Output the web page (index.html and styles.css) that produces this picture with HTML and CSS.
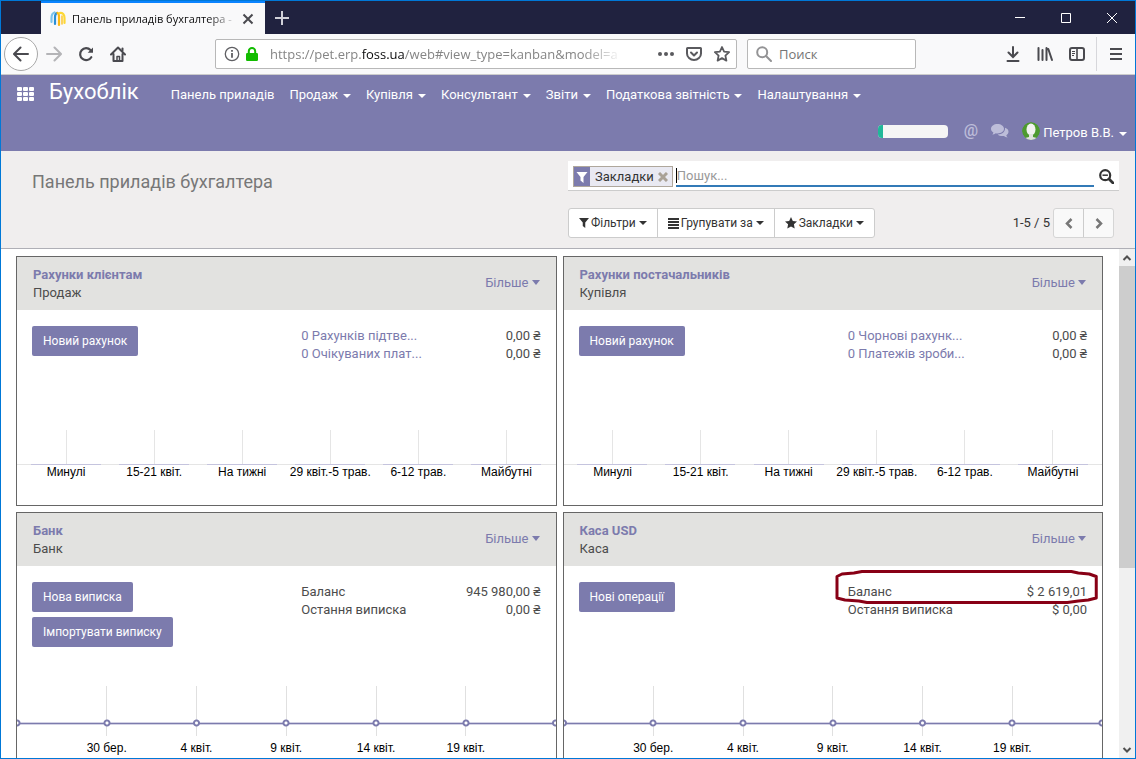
FILE: index.html
```html
<!DOCTYPE html>
<html lang="uk">
<head>
    <meta charset="UTF-8">
    <meta name="viewport" content="width=device-width, initial-scale=1.0">
    <title>Панель приладів бухгалтера</title>
    <link rel="stylesheet" href="styles.css">
</head>
<body>
<div class="window">

    <!-- Tabs -->
    <div class="titlebar">
        <div class="tab">
            <svg class="tab-icon" width="16" height="16" viewBox="0 0 16 16" fill="none" stroke-width="2.2" stroke-linecap="round">
                <path d="M1.500 11V7Q1.500 2.500 4.500 1.500" stroke="#7cc4ec"/>
                <path d="M5 13V6Q5 3 7 2" stroke="#2b8fd6"/>
                <path d="M7.500 2Q9 2.500 9 6V14" stroke="#fdb913"/>
                <path d="M9.500 2Q14.500 1.500 14.500 7V12" stroke="#fdd835"/>
                <path d="M12 5V13" stroke="#fdc52c" stroke-width="1.500"/>
            </svg>
            <span class="tab-title">Панель приладів бухгалтера -</span>
            <button class="tab-close" aria-label="Закрыть вкладку">
                <svg width="12" height="12" viewBox="0 0 12 12" stroke="#4a4a4f" stroke-width="2"><path d="M1.500 1.500l9 9M10.500 1.500l-9 9"/></svg>
            </button>
        </div>
        <button class="new-tab" aria-label="Новая вкладка">
            <svg width="14" height="14" viewBox="0 0 14 14" stroke="#d0d0d8" stroke-width="2"><path d="M7 0v14M0 7h14"/></svg>
        </button>
        <div class="window-buttons">
            <button aria-label="Свернуть"><svg width="10" height="10" stroke="#fff"><path d="M0 4.500h10"/></svg></button>
            <button aria-label="Развернуть"><svg width="10" height="10" stroke="#fff" fill="none"><path d="M.5.5h9v9h-9z"/></svg></button>
            <button aria-label="Закрыть"><svg width="10" height="10" stroke="#fff"><path d="M0 0l10 10M10 0L0 10"/></svg></button>
        </div>
    </div>

    <!-- Address bar -->
    <div class="toolbar">
        <button class="back" aria-label="Назад">
            <svg width="16" height="16" viewBox="0 0 16 16" fill="none" stroke="#4a4a4f" stroke-width="2" stroke-linecap="round" stroke-linejoin="round"><path d="M15 8H1.500M7.500 1.500L1 8l6.500 6.500"/></svg>
        </button>
        <button class="tool" aria-label="Вперёд">
            <svg width="16" height="16" viewBox="0 0 16 16" fill="none" stroke="#b4b4b7" stroke-width="2" stroke-linecap="round" stroke-linejoin="round"><path d="M1 8h13.500M8.500 1.500L15 8l-6.500 6.500"/></svg>
        </button>
        <button class="tool" aria-label="Обновить">
            <svg width="16" height="16" viewBox="0 0 16 16" fill="none" stroke="#4a4a4f" stroke-width="2.200" stroke-linecap="round"><path d="M13.300 11.200A6 6 0 1 1 12.500 4"/><path d="M15 1.500v5.300H9.700z" fill="#4a4a4f" stroke="none"/></svg>
        </button>
        <button class="tool" aria-label="Домой">
            <svg width="16" height="16" viewBox="0 0 16 16" fill="none" stroke="#4a4a4f" stroke-width="2" stroke-linecap="round" stroke-linejoin="round"><path d="M1 8.500L8 1.500l7 7M3.500 8v7h9V8"/><path d="M7 15v-4.500h2.500V15" stroke-width="1.500"/><path d="M12.500 2.500v2"/></svg>
        </button>
        <div class="urlbar">
            <svg width="16" height="16" viewBox="0 0 16 16" fill="none" stroke="#5f5f63"><circle cx="8" cy="8" r="6.700" stroke-width="1.300"/><path d="M8 7v4.800M8 4v1.800" stroke-width="1.800"/></svg>
            <svg class="lock" width="12" height="14" viewBox="0 0 12 14"><path d="M2.800 7V4.200a3.200 3.200 0 0 1 6.400 0V7" fill="none" stroke="#12bc00" stroke-width="2"/><rect y="6" width="12" height="8" rx="1.200" fill="#12bc00"/></svg>
            <span class="url">https://pet.erp.<b>foss.ua</b>/web#view_type=kanban&amp;model=a</span>
            <svg width="16" height="16" fill="#5a5a5e"><circle cx="2" cy="8" r="2"/><circle cx="8" cy="8" r="2"/><circle cx="14" cy="8" r="2"/></svg>
            <svg width="16" height="16" viewBox="0 0 16 16" fill="none" stroke="#5a5a5e" stroke-width="2" stroke-linecap="round" stroke-linejoin="round"><path d="M1.500 2h13q.5 0 .5.500V7.500A7 6.500 0 0 1 1 7.500V2.500q0-.5.5-.5z"/><path d="M5 6.500l3 3 3-3"/></svg>
            <svg width="16" height="16" viewBox="0 0 16 16" fill="none" stroke="#5a5a5e" stroke-width="1.800" stroke-linejoin="round"><path d="M8 1l2.100 4.600 5 .6-3.700 3.400 1 5L8 12.100l-4.400 2.500 1-5L.9 6.200l5-.6z"/></svg>
        </div>
        <label class="searchbar">
            <svg width="16" height="16" viewBox="0 0 16 16" fill="none" stroke="#939395" stroke-width="2" stroke-linecap="round"><circle cx="6.200" cy="6.200" r="5"/><path d="M10 10l5 5"/></svg>
            <input type="text" placeholder="Поиск" aria-label="Поиск">
        </label>
        <div class="toolbar-end">
            <button class="tool" aria-label="Загрузки">
                <svg width="14" height="16" viewBox="0 0 14 16" fill="none" stroke="#4a4a4f" stroke-width="2" stroke-linecap="round"><path d="M7 1v9.500M2.500 6.500L7 11l4.500-4.500M1.500 15h11"/></svg>
            </button>
            <button class="tool" aria-label="Библиотека">
                <svg width="16" height="16" viewBox="0 0 16 16" stroke="#4a4a4f" stroke-width="2" stroke-linecap="round"><path d="M1.500 2v12M5.500 4v10M9.500 2v12M11.300 3l3.700 11"/></svg>
            </button>
            <button class="tool" aria-label="Боковая панель">
                <svg width="16" height="16" viewBox="0 0 16 16" fill="none" stroke="#4a4a4f"><rect x="1" y="2" width="14" height="12" rx="2" stroke-width="2"/><path d="M8 2v12" stroke-width="1.600"/><path d="M3 5.500h3M3 7.500h3M3 9.500h2"/></svg>
            </button>
            <span class="separator"></span>
            <button class="tool" aria-label="Меню">
                <svg width="12" height="12" viewBox="0 0 12 12" stroke="#4a4a4f" stroke-width="2"><path d="M0 1h12M0 6h12M0 11h12"/></svg>
            </button>
        </div>
    </div>

    <!-- Application menu -->
    <header class="navbar">
        <div class="nav-row">
            <a class="apps" href="#" aria-label="Додатки">
                <svg width="18" height="14" fill="#fff"><rect width="5" height="4" rx="1"/><rect x="6" width="5" height="4" rx="1"/><rect x="12" width="5" height="4" rx="1"/><rect y="5" width="5" height="4" rx="1"/><rect x="6" y="5" width="5" height="4" rx="1"/><rect x="12" y="5" width="5" height="4" rx="1"/><rect y="10" width="5" height="4" rx="1"/><rect x="6" y="10" width="5" height="4" rx="1"/><rect x="12" y="10" width="5" height="4" rx="1"/></svg>
            </a>
            <span class="brand">Бухоблік</span>
            <nav class="menu">
                <a href="#">Панель приладів</a>
                <a href="#">Продаж<i class="caret"></i></a>
                <a href="#">Купівля<i class="caret"></i></a>
                <a href="#">Консультант<i class="caret"></i></a>
                <a href="#">Звіти<i class="caret"></i></a>
                <a href="#">Податкова звітність<i class="caret"></i></a>
                <a href="#">Налаштування<i class="caret"></i></a>
            </nav>
        </div>
        <div class="systray">
            <div class="planner"><div class="planner-fill"></div></div>
            <a class="mention" href="#">@</a>
            <a class="chat" href="#" aria-label="Повідомлення">
                <svg width="18" height="16" viewBox="0 0 18 16" fill="#bdbdd9"><path d="M6.500 1C10 1 13 3.100 13 5.800s-3 4.700-6.500 4.700c-.6 0-1.200 0-1.700-.2-1 .8-2.200 1.200-3.600 1.300.6-.6 1-1.200 1.200-2.100C1 8.700 0 7.400 0 5.800 0 3.100 3 1 6.500 1z"/><path d="M14 4.800c2.300.8 3.500 2.200 3.500 3.900 0 1.500-.9 2.700-2.200 3.500.2.900.6 1.600 1.300 2.200-1.400 0-2.700-.5-3.700-1.400-2.400.4-4.900-.2-6.200-1.500C10.800 11.500 14.500 9 14 4.800z"/></svg>
            </a>
            <a class="user" href="#">
                <svg width="18" height="18" viewBox="0 0 18 18"><defs><clipPath id="face"><circle cx="9" cy="9" r="9"/></clipPath></defs><g clip-path="url(#face)"><circle cx="9" cy="9" r="9" fill="#4d9a2f"/><ellipse cx="9" cy="7.500" rx="4.500" ry="6" fill="#f1f2ee"/><path d="M7 12h4v3l4 1v2H3v-2l4-1z" fill="#dfe3dc"/></g></svg>
                <span>Петров В.В.<i class="caret"></i></span>
            </a>
        </div>
    </header>

    <!-- Control panel -->
    <section class="control-panel">
        <h1>Панель приладів бухгалтера</h1>
        <div class="search-area">
            <div class="searchview">
                <div class="facet">
                    <span class="facet-icon"><svg width="12" height="12" viewBox="0 0 12 12" fill="#fff"><path d="M.5 1h11L7.500 6v6L4.500 9.500V6z"/></svg></span>
                    <span class="facet-label">Закладки</span>
                    <button class="facet-remove" aria-label="Видалити"><svg width="10" height="10" viewBox="0 0 10 10" stroke="#a9a196" stroke-width="3"><path d="M1 1l8 8M9 1L1 9"/></svg></button>
                </div>
                <div class="search-input">
                    <span class="cursor"></span>
                    <input type="text" placeholder="Пошук..." aria-label="Пошук">
                </div>
                <button class="search-more" aria-label="Розширений пошук">
                    <svg width="15" height="15" viewBox="0 0 15 15" fill="none" stroke="#333"><circle cx="6.200" cy="6.200" r="5" stroke-width="2.200"/><path d="M10 10l4 4" stroke-width="2.800" stroke-linecap="round"/><path d="M3.500 6.200h5.400" stroke-width="1.500"/></svg>
                </button>
            </div>
            <div class="search-options">
                <div class="btn-group">
                    <button><svg width="10" height="10" viewBox="0 0 12 12" fill="#333"><path d="M0 0h12L7.500 5.500V12L4.500 9.500v-4z"/></svg>Фільтри<i class="caret"></i></button>
                    <button><svg width="11" height="11" fill="#333"><path d="M0 0h11v2H0zM0 3h11v2H0zM0 6h11v2H0zM0 9h11v2H0z"/></svg>Групувати за<i class="caret"></i></button>
                    <button><svg width="12" height="12" viewBox="0 0 12 12" fill="#333"><path d="M6 0l1.800 3.900 4.200.5-3.100 2.900.8 4.200L6 9.400l-3.700 2.100.8-4.200L0 4.400l4.200-.5z"/></svg>Закладки<i class="caret"></i></button>
                </div>
                <div class="pager">
                    <span>1-5 / 5</span>
                    <div class="btn-group pager-group">
                        <button aria-label="Попередня"><svg width="8" height="11" viewBox="0 0 8 11" fill="none" stroke="#777" stroke-width="2.500"><path d="M6.500 1L2 5.500 6.500 10"/></svg></button>
                        <button aria-label="Наступна"><svg width="8" height="11" viewBox="0 0 8 11" fill="none" stroke="#777" stroke-width="2.500"><path d="M1.500 1L6 5.500 1.500 10"/></svg></button>
                    </div>
                </div>
            </div>
        </div>
    </section>

    <!-- Dashboard -->
    <div class="content">
        <main class="dashboard">
            <article class="card">
                <div class="card-header">
                    <div><a class="card-title" href="#">Рахунки клієнтам</a><p>Продаж</p></div>
                    <a class="more" href="#">Більше<i class="caret"></i></a>
                </div>
                <div class="card-body">
                    <div class="actions"><button>Новий рахунок</button></div>
                    <dl class="totals">
                        <dt><a href="#">0 Рахунків підтве...</a></dt><dd>0,00 ₴</dd>
                        <dt><a href="#">0 Очікуваних плат...</a></dt><dd>0,00 ₴</dd>
                    </dl>
                </div>
                <div class="bar-chart">
                    <span>Минулі</span><span>15-21 квіт.</span><span>На тижні</span><span>29 квіт.-5 трав.</span><span>6-12 трав.</span><span>Майбутні</span>
                </div>
            </article>

            <article class="card">
                <div class="card-header">
                    <div><a class="card-title" href="#">Рахунки постачальників</a><p>Купівля</p></div>
                    <a class="more" href="#">Більше<i class="caret"></i></a>
                </div>
                <div class="card-body">
                    <div class="actions"><button>Новий рахунок</button></div>
                    <dl class="totals">
                        <dt><a href="#">0 Чорнові рахунк...</a></dt><dd>0,00 ₴</dd>
                        <dt><a href="#">0 Платежів зроби...</a></dt><dd>0,00 ₴</dd>
                    </dl>
                </div>
                <div class="bar-chart">
                    <span>Минулі</span><span>15-21 квіт.</span><span>На тижні</span><span>29 квіт.-5 трав.</span><span>6-12 трав.</span><span>Майбутні</span>
                </div>
            </article>

            <article class="card">
                <div class="card-header">
                    <div><a class="card-title" href="#">Банк</a><p>Банк</p></div>
                    <a class="more" href="#">Більше<i class="caret"></i></a>
                </div>
                <div class="card-body">
                    <div class="actions"><button>Нова виписка</button><button>Імпортувати виписку</button></div>
                    <dl class="totals">
                        <dt>Баланс</dt><dd>945 980,00 ₴</dd>
                        <dt>Остання виписка</dt><dd>0,00 ₴</dd>
                    </dl>
                </div>
                <div class="line-chart">
                    <div class="points">
                        <span class="edge"></span><span>30 бер.</span><span>4 квіт.</span><span>9 квіт.</span><span>14 квіт.</span><span>19 квіт.</span><span class="edge"></span>
                    </div>
                </div>
            </article>

            <article class="card">
                <div class="card-header">
                    <div><a class="card-title" href="#">Каса USD</a><p>Каса</p></div>
                    <a class="more" href="#">Більше<i class="caret"></i></a>
                </div>
                <div class="card-body">
                    <div class="actions"><button>Нові операції</button></div>
                    <dl class="totals">
                        <dt>Баланс</dt><dd>$ 2 619,01</dd>
                        <dt>Остання виписка</dt><dd>$ 0,00</dd>
                    </dl>
                    <svg class="marker" viewBox="0 0 264 35" preserveAspectRatio="none" fill="none" stroke="#880015" stroke-width="3" stroke-linejoin="round"><path d="M27 1.500H237L244 3 255 4 262 6.500V28L254 30 244 31 233 32.500H32L24 31 10 30 2 28V6.500L7 4 19 3z"/></svg>
                </div>
                <div class="line-chart">
                    <div class="points">
                        <span class="edge"></span><span>30 бер.</span><span>4 квіт.</span><span>9 квіт.</span><span>14 квіт.</span><span>19 квіт.</span><span class="edge"></span>
                    </div>
                </div>
            </article>
        </main>

        <div class="scrollbar">
            <svg width="16" height="17" fill="none" stroke="#505050" stroke-width="2"><path d="M4.500 11L8 7.500l3.500 3.500"/></svg>
            <div class="thumb"></div>
            <div class="track"></div>
            <svg width="16" height="17" fill="none" stroke="#505050" stroke-width="2"><path d="M4.500 7L8 10.500 11.500 7"/></svg>
        </div>
    </div>
</div>
</body>
</html>
```

FILE: styles.css
```css
* {
    box-sizing: border-box;
}
body {
    margin: 0;
    font-family: Roboto, "Noto Sans", sans-serif;
    font-size: 13px;
    line-height: 18px;
    color: #4c4c4c;
}
a {
    color: #7c7bad;
    text-decoration: none;
}
button, input {
    font: inherit;
    margin: 0;
    padding: 0;
    border: none;
    background: none;
}
input {
    outline: none;
    min-width: 0;
}
svg {
    flex: none;
    display: block;
}
p, h1, dl, dd {
    margin: 0;
}
.window {
    height: 100vh;
    display: flex;
    flex-direction: column;
    border: 1px solid #0078d7;
    overflow: hidden;
    background: #fff;
}
.caret {
    display: inline-block;
    border: 4px solid transparent;
    border-top-color: currentColor;
    border-bottom: none;
    vertical-align: middle;
}

/* browser window */
.titlebar {
    flex: none;
    height: 33px;
    padding-left: 40px;
    display: flex;
    background: #20223f;
}
.tab {
    width: 224px;
    display: flex;
    align-items: center;
    padding: 0 11px 0 9px;
    border-top: 2px solid #0a84ff;
    background: #f9f9fa;
    font-family: "Open Sans", "Noto Sans", sans-serif;
    font-size: 11px;
    color: #0c0c0d;
}
.tab-title {
    flex: 1;
    margin-left: 6px;
    white-space: nowrap;
    overflow: hidden;
    -webkit-mask-image: linear-gradient(to left, transparent, #000 30px);
    mask-image: linear-gradient(to left, transparent, #000 30px);
}
.tab-close {
    margin-left: 4px;
}
.new-tab {
    padding: 0 10px;
}
.window-buttons {
    margin-left: auto;
    display: flex;
}
.window-buttons button {
    width: 46px;
    display: flex;
    align-items: center;
    justify-content: center;
}
.toolbar {
    flex: none;
    height: 41px;
    padding: 0 3px;
    display: flex;
    align-items: center;
    background: #f9f9fa;
    border-bottom: 1px solid #ccc;
    font-family: "Open Sans", "Noto Sans", sans-serif;
    font-size: 13px;
}
.back, .tool {
    width: 32px;
    height: 34px;
    display: flex;
    align-items: center;
    justify-content: center;
}
.back {
    width: 34px;
    border: 1px solid #a8a8a8;
    border-radius: 50%;
    background: #fff;
}
.urlbar, .searchbar {
    height: 30px;
    display: flex;
    align-items: center;
    border: 1px solid #b8b8b8;
    border-radius: 2px;
    background: #fff;
}
.urlbar {
    flex: 1;
    min-width: 0;
    margin-left: 81px;
    padding: 0 6px 0 8px;
    gap: 12px;
}
.lock {
    margin-left: -6px;
}
.url {
    flex: 1;
    margin-right: 24px;
    white-space: nowrap;
    overflow: hidden;
    color: #858585;
    -webkit-mask-image: linear-gradient(to left, transparent, #000 40px);
    mask-image: linear-gradient(to left, transparent, #000 40px);
}
.url b {
    font-weight: normal;
    color: #0c0c0d;
}
.searchbar {
    width: 169px;
    margin-left: 10px;
    padding: 0 8px;
    gap: 7px;
}
.searchbar input {
    flex: 1;
}
.searchbar input::placeholder {
    color: #757575;
    opacity: 1;
}
.toolbar-end {
    margin-left: 81px;
    display: flex;
    align-items: center;
}
.separator {
    width: 1px;
    height: 34px;
    margin: 0 3px;
    background: #d7d7db;
}

/* main menu */
.navbar {
    flex: none;
    height: 76px;
    background: #7c7bad;
}
.nav-row {
    height: 38px;
    display: flex;
    align-items: center;
    padding-left: 16px;
}
.navbar a {
    color: #fff;
}
.brand {
    margin: -4px 32px 0 14px;
    font-size: 22px;
    line-height: 26px;
    color: #fff;
}
.menu {
    display: flex;
    gap: 15px;
    padding-top: 2px;
    white-space: nowrap;
}
.navbar .caret {
    margin-left: 5px;
}
.systray {
    display: flex;
    justify-content: flex-end;
    align-items: center;
    padding: 7px 8px 0 0;
}
.planner {
    width: 70px;
    height: 13px;
    border-radius: 4px;
    background: #f5f5f5;
    overflow: hidden;
}
.planner-fill {
    width: 5px;
    height: 100%;
    background: #21b799;
}
.systray .mention {
    margin: 0 13px 0 16px;
    font-size: 16px;
    font-weight: 500;
    color: #bdbdd9;
}
.user {
    display: flex;
    align-items: center;
    margin-left: 13px;
}
.user svg {
    margin-right: 3px;
}
.user span {
    padding-top: 4px;
}

/* control panel */
.control-panel {
    flex: none;
    display: grid;
    grid-template-columns: 1fr 1fr;
    padding: 10px 0;
    background: #f0eeee;
    border-bottom: 1px solid #afafb6;
}
.control-panel h1 {
    padding: 10px 31px;
    font-size: 18px;
    line-height: 22px;
    font-weight: normal;
    color: #777;
}
.search-area {
    padding-right: 16px;
}
.searchview {
    height: 30px;
    display: flex;
    padding: 5px 5px 3px;
    background: #fff;
    border-bottom: 1px solid #ccc;
}
.facet {
    height: 21px;
    display: flex;
    align-items: center;
    border: 1px solid #afa79c;
    background: #e9e9f2;
    color: #333;
}
.facet-icon {
    height: 100%;
    display: flex;
    align-items: center;
    padding: 0 2px;
    background: #7c7bad;
}
.facet-label {
    margin: 0 4px 0 5px;
}
.facet-remove {
    padding-right: 4px;
}
.search-input {
    flex: 1;
    display: flex;
    align-items: center;
    margin: 0 5px 0 3px;
    border-bottom: 2px solid #337ab7;
}
.cursor {
    width: 1px;
    height: 15px;
    background: #000;
}
.search-input input {
    flex: 1;
}
.search-input input::placeholder {
    color: #999;
    opacity: 1;
}
.search-options {
    display: flex;
    justify-content: space-between;
    padding-top: 17px;
}
.btn-group {
    display: flex;
    border: 1px solid #ccc;
    border-radius: 3px;
    background: #fff;
}
.btn-group button {
    height: 28px;
    display: flex;
    align-items: center;
    padding: 0 10px;
    font-size: 12px;
    color: #333;
}
.btn-group button + button {
    border-left: 1px solid #ccc;
}
.btn-group svg {
    margin-right: 2px;
}
.btn-group .caret {
    margin-left: 3px;
}
.pager {
    display: flex;
    align-items: center;
    gap: 3px;
    padding-right: 5px;
    color: #333;
}
.pager-group {
    background: #f9f9f9;
    border-color: #d5d5d5;
}
.pager-group svg {
    margin: 0;
}
.pager-group button {
    padding: 0 10px 0 11px;
}

/* dashboard */
.content {
    flex: 1;
    min-height: 0;
    display: flex;
}
.dashboard {
    flex: 1;
    min-width: 0;
    display: grid;
    grid-template-columns: 1fr 1fr;
    grid-auto-rows: 250px;
    gap: 6px;
    padding: 7px 16px 0 15px;
    overflow: hidden;
}
.card {
    min-width: 0;
    display: flex;
    flex-direction: column;
    border: 1px solid #666;
}
.card-header {
    height: 53px;
    display: flex;
    justify-content: space-between;
    align-items: center;
    padding: 0 16px;
    background: #e2e2e0;
}
.card-title {
    font-weight: bold;
}
.more {
    padding-bottom: 2px;
}
.more .caret {
    margin: 0 0 2px 3px;
    border-top-width: 5px;
}
.card-body {
    position: relative;
    display: grid;
    grid-template-columns: 1fr 1fr;
    padding-top: 16px;
}
.actions {
    display: flex;
    flex-direction: column;
    align-items: flex-start;
    gap: 5px;
    padding: 0 15px;
}
.actions button {
    height: 30px;
    padding: 0 11px;
    border-radius: 2px;
    background: #7c7bad;
    color: #fff;
    font-size: 12px;
}
.totals {
    display: grid;
    grid-template-columns: 1fr 1fr;
    align-content: start;
    padding: 1px 15px 0;
}
.totals dt {
    white-space: nowrap;
}
.totals dd {
    text-align: right;
}
.marker {
    position: absolute;
    top: 4px;
    right: 4px;
    width: calc(50% - 6px);
    height: 35px;
}

/* charts */
.bar-chart, .line-chart {
    margin-top: auto;
    font-family: "Liberation Sans", Arial, sans-serif;
    font-size: 12px;
    line-height: 14px;
    color: #000;
}
.bar-chart {
    height: 75px;
    padding: 0 5px;
    display: flex;
    background: linear-gradient(#e5e5e5, #e5e5e5) 0 34px / 100% 1px no-repeat;
}
.bar-chart span {
    flex: 1 1 0;
    min-width: 0;
    text-align: center;
    white-space: nowrap;
}
.bar-chart span::before {
    content: "";
    display: block;
    height: 35px;
    background:
        linear-gradient(#c5c4de, #c5c4de) 50% 100% / 80% 1px no-repeat,
        linear-gradient(#e5e5e5, #e5e5e5) 50% 0 / 1px 34px no-repeat;
}
.line-chart {
    height: 75px;
    overflow: hidden;
}
.points {
    width: calc(100% * 7 / 6);
    margin-left: calc(100% / -12);
    display: flex;
    background:
        linear-gradient(#7c7bad, #7c7bad) 0 37px / 100% 1px no-repeat,
        linear-gradient(#d3d2e5, #d3d2e5) 0 36px / 100% 3px no-repeat;
}
.points span {
    flex: 1 1 0;
    height: 69px;
    padding-top: 55px;
    text-align: center;
    background:
        radial-gradient(circle at 50% 37px, #fff 1px, #7c7bad 2px, #7c7bad 3px, transparent 4px),
        linear-gradient(#e0e0e0, #e0e0e0) 50% 0 / 1px 50px no-repeat;
}
.points .edge {
    background: radial-gradient(circle at 50% 37px, #fff 1px, #7c7bad 2px, #7c7bad 3px, transparent 4px);
}

/* scrollbar */
.scrollbar {
    width: 16px;
    display: flex;
    flex-direction: column;
    background: #f0f0f0;
}
.thumb {
    flex: 7;
    background: #cdcdcd;
}
.track {
    flex: 4;
}
```
